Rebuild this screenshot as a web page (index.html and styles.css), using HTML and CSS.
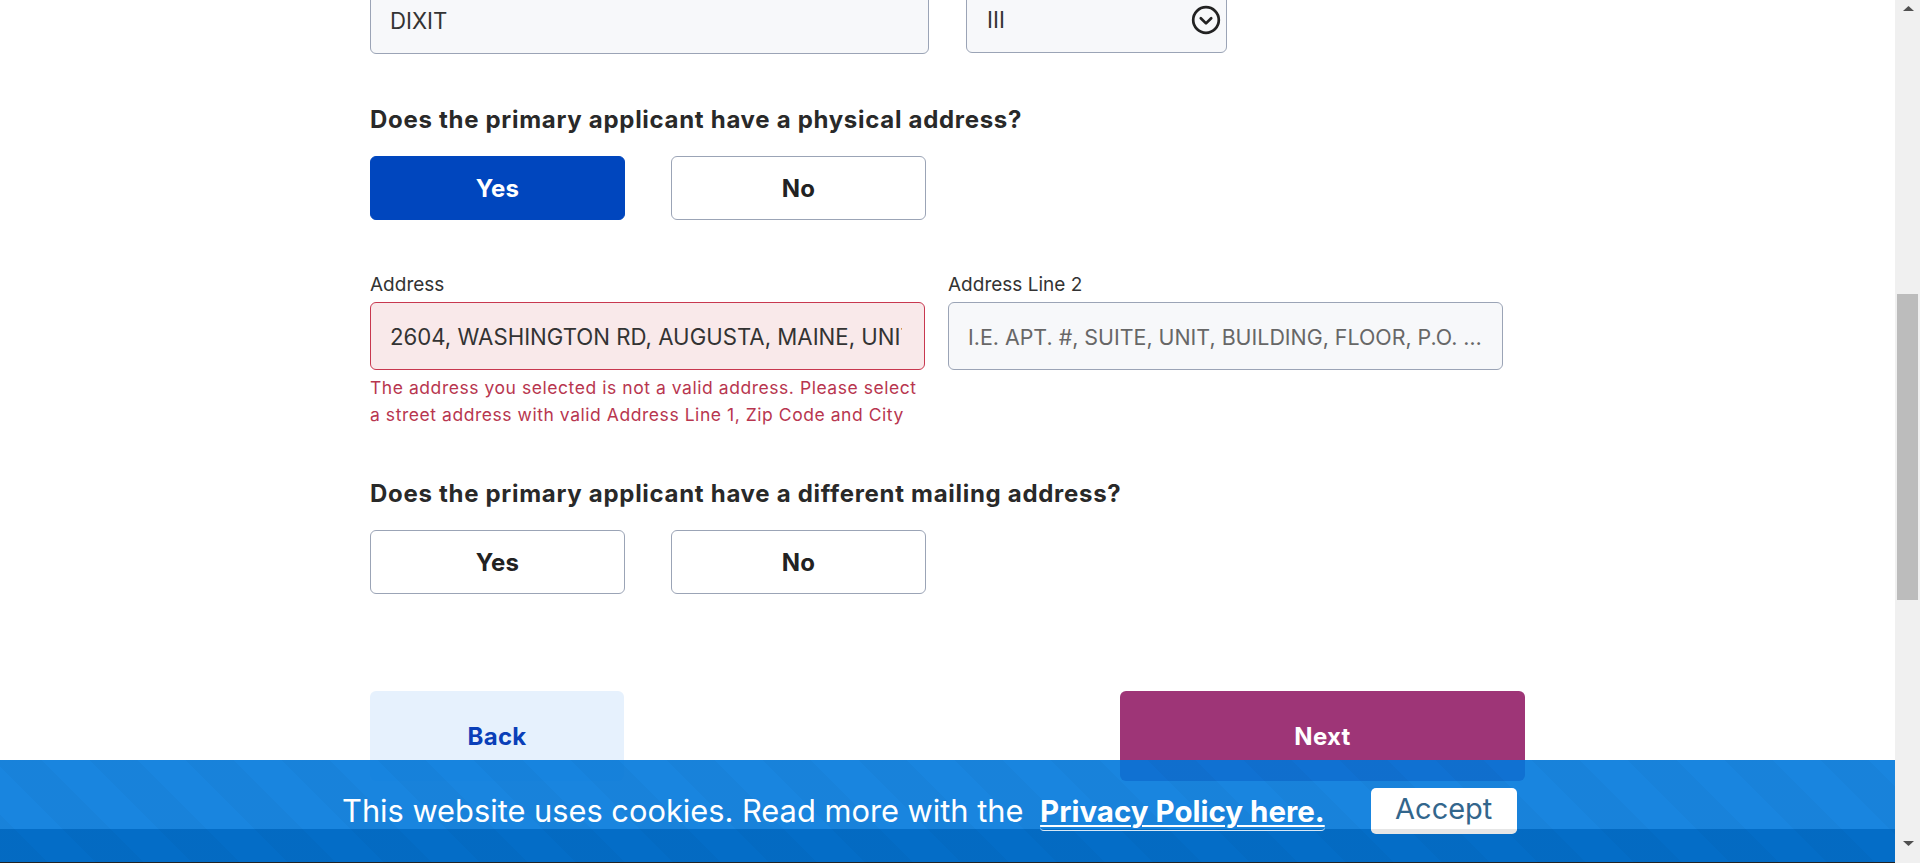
FILE: index.html
```html
<!DOCTYPE html>
<html lang="en">
<head>
<meta charset="utf-8">
<title>Primary applicant address</title>
<link rel="stylesheet" href="styles.css">
</head>
<body>
<div class="viewport">
  <main class="page">
    <form class="form">
      <div class="name-row">
        <input class="field field-name" type="text" value="DIXIT">
        <div class="field select-box" role="combobox">
          <span>III</span>
          <svg class="chev" width="30" height="30" viewBox="0 0 30 30"><circle cx="15" cy="15" r="12.8" fill="none" stroke="#222" stroke-width="2.7"/><path d="M9.8 13.2 L15 18.4 L20.2 13.2" fill="none" stroke="#222" stroke-width="2.7" stroke-linecap="round" stroke-linejoin="round"/></svg>
        </div>
      </div>

      <h2 class="question">Does the primary applicant have a physical address?</h2>
      <div class="choice-row">
        <button type="button" class="choice active">Yes</button>
        <button type="button" class="choice">No</button>
      </div>

      <div class="address-row">
        <div class="col">
          <label class="label">Address</label>
          <input class="field field-error" type="text" value="2604, WASHINGTON RD, AUGUSTA, MAINE, UNITED STATES">
          <p class="error">The address you selected is not a valid address. Please select<br>a street address with valid Address Line 1, Zip Code and City</p>
        </div>
        <div class="col">
          <label class="label">Address Line 2</label>
          <input class="field field-line2" type="text" placeholder="I.E. APT. #, SUITE, UNIT, BUILDING, FLOOR, P.O. &#8230;">
        </div>
      </div>

      <h2 class="question q2">Does the primary applicant have a different mailing address?</h2>
      <div class="choice-row">
        <button type="button" class="choice">Yes</button>
        <button type="button" class="choice">No</button>
      </div>

      <div class="nav-row">
        <button type="button" class="nav back">Back</button>
        <button type="button" class="nav next">Next</button>
      </div>
    </form>

    <div class="cookie">
      <div class="cookie-inner">
        <p class="cookie-msg">This website uses cookies. Read more with the <a class="cookie-link" href="#">Privacy Policy here.</a></p>
        <button type="button" class="accept">Accept</button>
      </div>
    </div>
  </main>

  <div class="scrollbar">
    <div class="sb-btn"><svg width="11" height="5" viewBox="0 0 11 5"><path d="M0 5 L5.5 0 L11 5 Z" fill="#505050"/></svg></div>
    <div class="sb-track"><div class="sb-thumb"></div></div>
    <div class="sb-btn sb-down"><svg width="11" height="5" viewBox="0 0 11 5"><path d="M0 0 L5.5 5 L11 0 Z" fill="#505050"/></svg></div>
  </div>
</div>
</body>
</html>
```

FILE: styles.css
```css
* { box-sizing: border-box; }

html, body {
  margin: 0;
  height: 100%;
}

body {
  font-family: Inter, "Noto Sans", sans-serif;
  color: #2a2a2a;
  background: #fff;
  overflow: hidden;
}

.viewport {
  display: flex;
  height: 863px;
}

.page {
  flex: 1;
  position: relative;
  overflow: hidden;
}

.form {
  width: 1155px;
  margin: 0 auto;
}

.name-row {
  display: flex;
  gap: 37px;
  margin-top: -14px;
}

.field {
  height: 68px;
  border: 1px solid #9ba4b6;
  border-radius: 6px;
  background: #f7f8fa;
  font-family: Inter, "Noto Sans", sans-serif;
  font-size: 22.2px;
  color: #333;
  padding: 0 22px 0 19px;
  width: 100%;
  outline: none;
}

.field::placeholder {
  color: #676767;
  opacity: 1;
}

.field-line2 {
  padding: 0 16px 0 19px;
  text-overflow: ellipsis;
}

.field-line2::placeholder {
  font-size: 21.4px;
}

.field-name { width: 559px; }

.select-box {
  width: 261px;
  height: 67px;
  display: flex;
  align-items: center;
  justify-content: space-between;
  padding: 0 5px 0 20px;
}

.field-error {
  background: #f9e9ea;
  border-color: #c8384f;
}

.question {
  font-size: 24px;
  line-height: 32px;
  font-weight: 700;
  letter-spacing: 0.7px;
  color: #292929;
  margin: 50px 0 0;
}

.question.q2 { margin-top: 50px; }

.choice-row {
  display: flex;
  gap: 46px;
  margin-top: 20px;
}

.choice {
  width: 255px;
  height: 64px;
  border: 1px solid #9ba4b6;
  border-radius: 6px;
  background: #fff;
  font-family: Inter, "Noto Sans", sans-serif;
  font-size: 24px;
  font-weight: 700;
  letter-spacing: 0.3px;
  color: #222;
  padding: 0;
}

.choice.active {
  background: #0046be;
  border-color: #0046be;
  color: #fff;
}

.address-row {
  display: flex;
  gap: 23px;
  margin-top: 53px;
}

.col { width: 555px; }

.label {
  display: block;
  font-size: 19px;
  line-height: 24px;
  color: #333;
  margin-bottom: 5px;
}

.error {
  margin: 4px 0 0;
  font-size: 17.5px;
  line-height: 27px;
  letter-spacing: 0.55px;
  color: #b8364f;
  white-space: nowrap;
}

.nav-row {
  display: flex;
  justify-content: space-between;
  margin-top: 97px;
}

.nav {
  height: 90px;
  border: none;
  border-radius: 6px;
  font-family: Inter, "Noto Sans", sans-serif;
  font-size: 24px;
  font-weight: 700;
  letter-spacing: 0.3px;
  padding: 0;
}

.back {
  width: 254px;
  background: #e6f1fd;
  color: #0a3fb8;
}

.next {
  width: 405px;
  background: #9e3577;
  color: #fff;
}

.cookie {
  position: absolute;
  left: 0;
  right: 0;
  bottom: 0;
  height: 103px;
  background:
    repeating-linear-gradient(45deg, rgba(0, 0, 0, 0.025) 0 34px, rgba(255, 255, 255, 0) 34px 68px),
    linear-gradient(to bottom, rgba(0, 0, 0, 0) 0 69px, #046dc7 69px 102px, #222 102px 103px),
    rgba(0, 120, 220, 0.9);
}

.cookie-inner {
  display: flex;
  align-items: center;
  height: 46px;
  margin-top: 28px;
  padding-left: 342px;
}

.cookie-msg {
  margin: 0;
  font-size: 30.8px;
  line-height: 40px;
  color: #fff;
  white-space: nowrap;
}

.cookie-link {
  margin-left: 8px;
  font-size: 29.5px;
  font-weight: 700;
  color: #fff;
  text-decoration: underline;
  text-decoration-thickness: 2px;
  text-underline-offset: 3px;
  border-bottom: 1px solid rgba(255, 255, 255, 0.85);
  border-radius: 4px;
  padding-bottom: 1px;
}

.accept {
  margin-left: 46px;
  width: 146px;
  height: 46px;
  background: #fff;
  border: none;
  border-bottom: 5px solid #e6e6e6;
  border-radius: 5px;
  font-family: Inter, "Noto Sans", sans-serif;
  font-size: 29px;
  color: #33668c;
  padding: 0;
}

.scrollbar {
  width: 25px;
  background: #f0f0f0;
  display: flex;
  flex-direction: column;
}

.sb-btn {
  height: 16px;
  display: flex;
  align-items: center;
  justify-content: center;
  padding-left: 1px;
}

.sb-down { height: 32px; align-items: flex-start; padding-top: 10px; }

.sb-track {
  flex: 1;
  padding: 278px 2px 0 2px;
}

.sb-thumb {
  height: 306px;
  background: #bcbcbc;
}
```
